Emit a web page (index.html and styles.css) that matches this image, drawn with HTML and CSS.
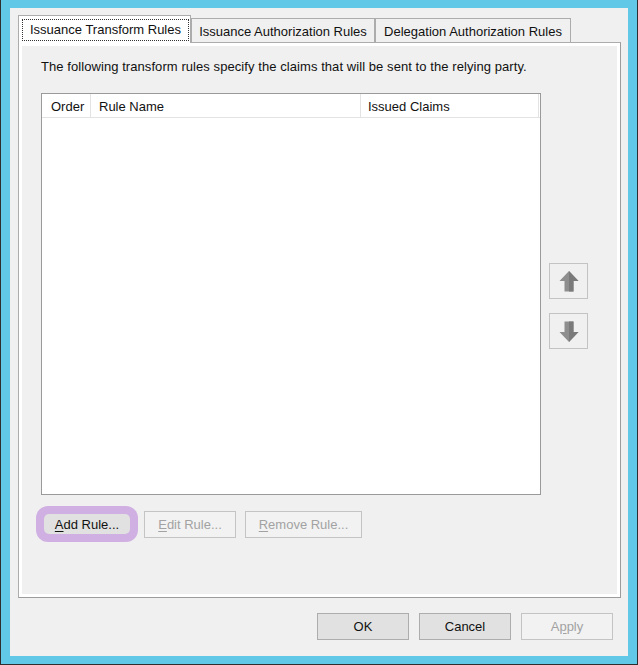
FILE: index.html
```html
<!DOCTYPE html>
<html>
<head>
<meta charset="utf-8">
<link rel="stylesheet" href="styles.css">
</head>
<body>
<div class="frame">
  <div class="dialog">
    <div class="tabs">
      <div class="tab tab-active"><span class="focus">Issuance Transform Rules</span></div>
      <div class="tab tab-2">Issuance Authorization Rules</div>
      <div class="tab tab-3">Delegation Authorization Rules</div>
    </div>
    <div class="panel">
      <p class="intro">The following transform rules specify the claims that will be sent to the relying party.</p>
      <div class="list-row">
        <div class="list">
          <div class="list-head">
            <div class="col col-order">Order</div>
            <div class="col col-name">Rule Name</div>
            <div class="col col-claims">Issued Claims</div>
          </div>
        </div>
        <div class="move">
          <div class="move-btn move-up">
            <svg width="20" height="21" viewBox="0 0 20 21"><path d="M10 0 L19.5 10 L14.5 10 L14.5 20.5 L5.5 20.5 L5.5 10 L0.5 10 Z" fill="#8e8e8e"/><path d="M10 0 L19.5 10 L14.5 10 L14.5 20.5 L10 20.5 Z" fill="#7a7a7a"/></svg>
          </div>
          <div class="move-btn move-down">
            <svg width="20" height="21" viewBox="0 0 20 21"><path d="M10 21 L19.5 11 L14.5 11 L14.5 0.5 L5.5 0.5 L5.5 11 L0.5 11 Z" fill="#8e8e8e"/><path d="M10 21 L19.5 11 L14.5 11 L14.5 0.5 L10 0.5 Z" fill="#7a7a7a"/></svg>
          </div>
        </div>
      </div>
      <div class="actions">
        <div class="add-ring"><div class="btn btn-add"><u>A</u>dd Rule...</div></div>
        <div class="btn btn-disabled btn-edit"><u>E</u>dit Rule...</div>
        <div class="btn btn-disabled btn-remove"><u>R</u>emove Rule...</div>
      </div>
    </div>
    <div class="footer">
      <div class="btn btn-foot">OK</div>
      <div class="btn btn-foot">Cancel</div>
      <div class="btn btn-foot btn-disabled">A<u>p</u>ply</div>
    </div>
  </div>
</div>
</body>
</html>
```
FILE: styles.css
```css
html, body {
  margin: 0;
  padding: 0;
}
body {
  width: 638px;
  height: 665px;
  overflow: hidden;
  font-family: "Liberation Sans", Arial, sans-serif;
  font-size: 13px;
  color: #111;
}
.frame {
  box-sizing: border-box;
  width: 638px;
  height: 665px;
  background: #62c8e8;
  border-left: 1px solid #2e2e2e;
  border-right: 1px solid #2e2e2e;
  border-bottom: 1px solid #2e2e2e;
  padding: 8px 9px 8px 9px;
}
.dialog {
  box-sizing: border-box;
  width: 618px;
  height: 648px;
  background: #f0f0f0;
  padding: 7px 7px 0 8px;
  display: flex;
  flex-direction: column;
}
.tabs {
  display: flex;
  align-items: flex-end;
  height: 27px;
}
.tab {
  box-sizing: border-box;
  height: 24px;
  border: 1px solid #acacac;
  border-bottom: none;
  background: #f0f0f0;
  display: flex;
  align-items: center;
  justify-content: center;
  line-height: 15px;
  padding-top: 2px;
  white-space: nowrap;
}
.tab-active {
  position: relative;
  z-index: 1;
  width: 173px;
  height: 28px;
  margin-bottom: -1px;
  background: #ffffff;
  padding: 3px 1px 2px 3px;
  align-items: stretch;
}
.focus {
  flex: 1;
  border: 1px dotted #333;
  display: flex;
  align-items: center;
  justify-content: center;
  padding-bottom: 1px;
}
.tab-2 {
  width: 184px;
}
.tab-3 {
  width: 196px;
}
.panel {
  box-sizing: border-box;
  width: 603px;
  height: 556px;
  border: 1px solid #acacac;
  border-right-color: #9c9c9c;
  border-bottom-color: #9c9c9c;
  box-shadow: inset 0 0 0 3px #ffffff;
  padding: 16px 0 0 22px;
  display: flex;
  flex-direction: column;
}
.intro {
  margin: 0;
  line-height: 15px;
  white-space: nowrap;
  letter-spacing: 0.07px;
}
.list-row {
  display: flex;
  margin-top: 19px;
}
.list {
  box-sizing: border-box;
  width: 500px;
  height: 402px;
  border: 1px solid #9a9a9a;
  background: #ffffff;
}
.list-head {
  display: flex;
  height: 23px;
  border-bottom: 1px solid #e3e3e3;
}
.col {
  box-sizing: border-box;
  border-right: 1px solid #e3e3e3;
  line-height: 15px;
  padding: 5px 0 0 8px;
  white-space: nowrap;
}
.col-order {
  width: 49px;
  padding-left: 9px;
}
.col-name {
  width: 270px;
}
.col-claims {
  width: 178px;
  padding-left: 7px;
}
.move {
  margin-left: 8px;
  display: flex;
  flex-direction: column;
}
.move-btn {
  box-sizing: border-box;
  width: 39px;
  height: 36px;
  border: 1px solid #c3c3c3;
  background: #f0f0f0;
  display: flex;
  align-items: center;
  justify-content: center;
}
.move-up {
  margin-top: 170px;
}
.move-down {
  margin-top: 14px;
}
.actions {
  display: flex;
  align-items: center;
  margin-top: 11px;
  margin-left: -5px;
}
.add-ring {
  background: #d0b0e2;
  border-radius: 12px;
  padding: 8px;
  width: 86px;
  height: 20px;
}
.btn {
  box-sizing: border-box;
  display: flex;
  align-items: center;
  justify-content: center;
  line-height: 15px;
  white-space: nowrap;
}
.btn-add {
  width: 86px;
  height: 20px;
  background: #e1e1e1;
  border-radius: 5px;
  color: #111;
}
.btn-disabled {
  border: 1px solid #c4c4c4;
  background: #f2f2f2;
  color: #a2a2a2;
}
.btn-edit {
  width: 92px;
  height: 27px;
  margin-left: 6px;
}
.btn-remove {
  width: 117px;
  height: 27px;
  margin-left: 9px;
}
.footer {
  display: flex;
  justify-content: flex-end;
  gap: 10px;
  margin-top: 15px;
  margin-right: 8px;
}
.btn-foot {
  width: 92px;
  height: 27px;
  border: 1px solid #adadad;
  background: #e1e1e1;
}
.btn-foot.btn-disabled {
  border-color: #c4c4c4;
  background: #f2f2f2;
  color: #a2a2a2;
}
u {
  text-decoration: underline;
  text-underline-offset: 2px;
}
```
